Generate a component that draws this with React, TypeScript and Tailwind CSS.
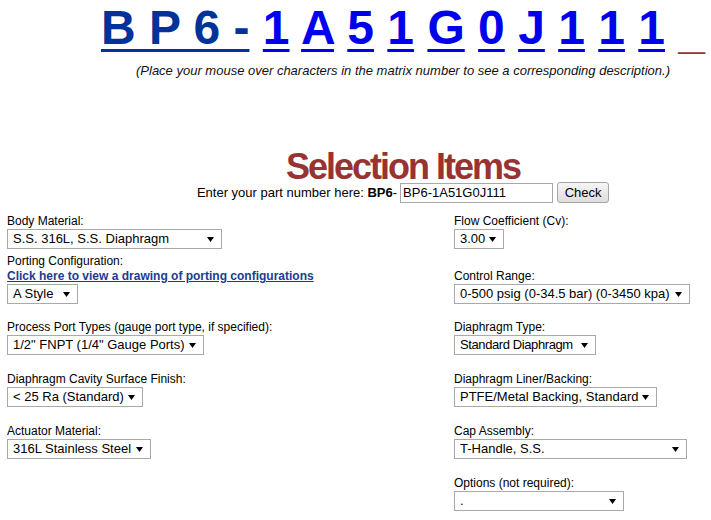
import React from 'react';

const HEAD_LINK = 'text-[#0000ee] underline decoration-[3px] underline-offset-[5px]';

function Arrow() {
  return (
    <svg width="7" height="5" viewBox="0 0 7 5" className="shrink-0 ml-[4px]">
      <polygon points="0,0 7,0 3.5,5" fill="#000" />
    </svg>
  );
}

function FakeSelect({ value, width, textClass = '' }: { value: string; width: string; textClass?: string }) {
  return (
    <div className={`flex w-fit items-center h-[20px] border border-[#a9a9a9] bg-white pl-[5px] pr-[7px] ${width}`}>
      <span className={`flex-1 text-[13px] leading-[18px] whitespace-nowrap ${textClass}`}>{value}</span>
      <Arrow />
    </div>
  );
}

function Field({
  label,
  value,
  width,
  className = '',
  textClass,
  children,
}: {
  label: string;
  value: string;
  width: string;
  className?: string;
  textClass?: string;
  children?: React.ReactNode;
}) {
  return (
    <div className={className}>
      <div className="text-[12px] leading-[15px]">{label}</div>
      {children}
      <FakeSelect value={value} width={width} textClass={textClass} />
    </div>
  );
}

export default function App() {
  const chars = ['1', 'A', '5', '1', 'G', '0', 'J', '1', '1', '1'];

  return (
    <div className="w-[711px] h-[520px] overflow-hidden bg-white text-black font-['Liberation_Sans',Arial,sans-serif]">
      <div className="w-[806px] text-center">
        <div className="text-[48px] font-bold leading-[56px] whitespace-nowrap">
          <a className="text-[#003399] underline decoration-[3px] underline-offset-[5px]">B P 6 -</a>
          {chars.map((c, i) => (
            <React.Fragment key={i}>
              {' '}
              <a className={HEAD_LINK}>{c}</a>
            </React.Fragment>
          ))}{' '}
          <span className="relative top-[4px] text-[#993333]">_</span>
        </div>
        <p className="mt-[7px] text-[13px] leading-[15px] italic text-[#111]">
          (Place your mouse over characters in the matrix number to see a corresponding description.)
        </p>
        <h1 className="mt-[74px] text-[36px] leading-[30px] font-bold tracking-[-2px] text-[#993333]">
          Selection Items
        </h1>
        <div className="flex justify-center items-center h-[21px]">
          <span className="text-[13px]">
            Enter your part number here: <b>BP6</b>-
          </span>
          <div className="ml-[3px] w-[153px] h-[20px] border border-[#a9a9a9] flex items-center px-[2px] text-[13px]">
            BP6-1A51G0J111
          </div>
          <button className="ml-[4px] w-[52px] h-[21px] border border-[#a6a6a6] rounded-[3px] bg-gradient-to-b from-[#f6f6f6] to-[#dedede] text-[13px] leading-[19px]">
            Check
          </button>
        </div>
      </div>

      <div className="flex mt-[11px] pl-[7px]">
        <div className="w-[447px]">
          <Field label="Body Material:" value="S.S. 316L, S.S. Diaphragm" width="min-w-[215px]" />
          <Field label="Porting Configuration:" value="A Style" width="min-w-[71px]" className="mt-[5px]">
            <a className="block text-[12px] leading-[15px] font-bold text-[#1a3d8f] underline">
              Click here to view a drawing of porting configurations
            </a>
          </Field>
          <Field
            label="Process Port Types (gauge port type, if specified):"
            value={'1/2" FNPT (1/4" Gauge Ports)'}
            width="min-w-[196px]"
            className="mt-[16px]"
          />
          <Field
            label="Diaphragm Cavity Surface Finish:"
            value="< 25 Ra (Standard)"
            width="min-w-[134px]"
            className="mt-[17px]"
          />
          <Field label="Actuator Material:" value="316L Stainless Steel" width="min-w-[144px]" className="mt-[17px]" />
        </div>
        <div>
          <Field label="Flow Coefficient (Cv):" value="3.00" width="min-w-[49px]" />
          <Field
            label="Control Range:"
            value="0-500 psig (0-34.5 bar) (0-3450 kpa)"
            width="min-w-[236px]"
            className="mt-[20px]"
          />
          <Field
            label="Diaphragm Type:"
            value="Standard Diaphragm"
            width="min-w-[142px]"
            textClass="tracking-[-0.4px]"
            className="mt-[16px]"
          />
          <Field
            label="Diaphragm Liner/Backing:"
            value="PTFE/Metal Backing, Standard"
            width="min-w-[203px]"
            className="mt-[17px]"
          />
          <Field label="Cap Assembly:" value="T-Handle, S.S." width="min-w-[233px]" className="mt-[17px]" />
          <Field label="Options (not required):" value="." width="min-w-[170px]" className="mt-[17px]" />
        </div>
      </div>
    </div>
  );
}
